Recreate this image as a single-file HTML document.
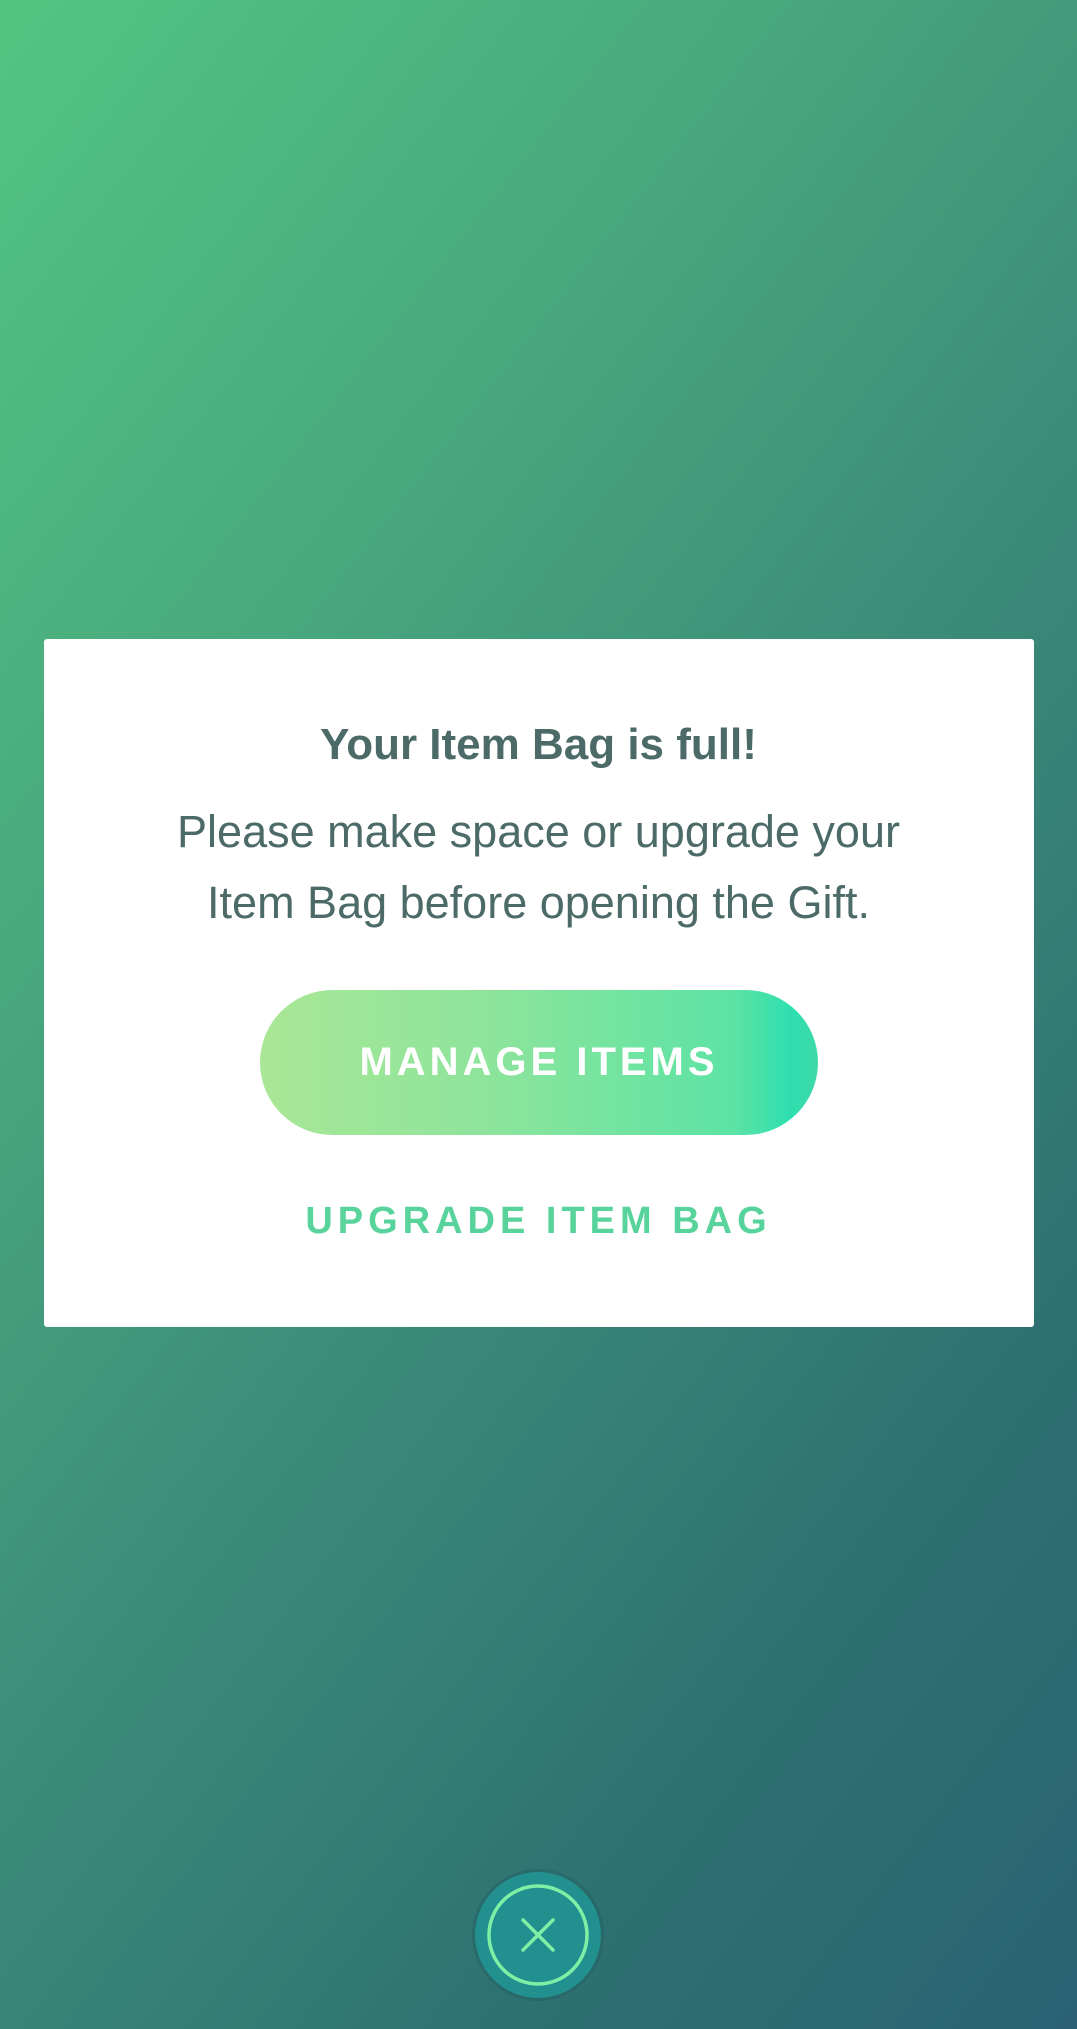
<!DOCTYPE html>
<html><head><meta charset="utf-8"><style>
html,body{margin:0;padding:0}
body{width:1077px;height:2029px;position:relative;overflow:hidden;font-family:"Liberation Sans",sans-serif;
background:linear-gradient(128deg,#53c580 0%,#48a77e 30%,#3a8a78 55%,#2f7172 78%,#2a6273 100%);}
.card{position:absolute;left:44px;top:639px;width:990px;height:688px;background:#fff;border-radius:3px}
.t{position:absolute;left:0;width:100%;text-align:center;color:#4b6a68;white-space:nowrap}
.title{top:720px;font-size:44px;font-weight:bold}
.body{font-size:45px;line-height:71px}
.btn{position:absolute;left:260px;top:990px;width:558px;height:145px;border-radius:73px;
background:linear-gradient(90deg,#a9e796 0%,#8ee49b 40%,#5ce3a4 85%,#2fdfaf 95%,#3fd9a8 100%);}
.btn span{position:absolute;left:0;width:100%;top:0;line-height:145px;text-align:center;color:#fff;font-size:40px;font-weight:bold;letter-spacing:4px}
.up{top:1200px;font-size:38px;font-weight:bold;letter-spacing:5px;color:#58d39b}
.close{position:absolute;left:475px;top:1872px;width:126px;height:126px;border-radius:50%;background:#22908e;box-shadow:0 0 0 3px rgba(30,90,90,.35)}
</style></head><body>
<div class="card"></div>
<div class="t title">Your Item Bag is full!</div>
<div class="t body" style="top:796px">Please make space or upgrade your</div>
<div class="t body" style="top:867px">Item Bag before opening the Gift.</div>
<div class="btn"><span>MANAGE ITEMS</span></div>
<div class="t up">UPGRADE ITEM BAG</div>
<div class="close"><svg width="126" height="126" viewBox="0 0 126 126"><circle cx="63" cy="63" r="49" fill="none" stroke="#7ef0a6" stroke-width="3.5"/><path d="M48 48L78 78M78 48L48 78" stroke="#7ef0a6" stroke-width="3.5" stroke-linecap="round"/></svg></div>
</body></html>
